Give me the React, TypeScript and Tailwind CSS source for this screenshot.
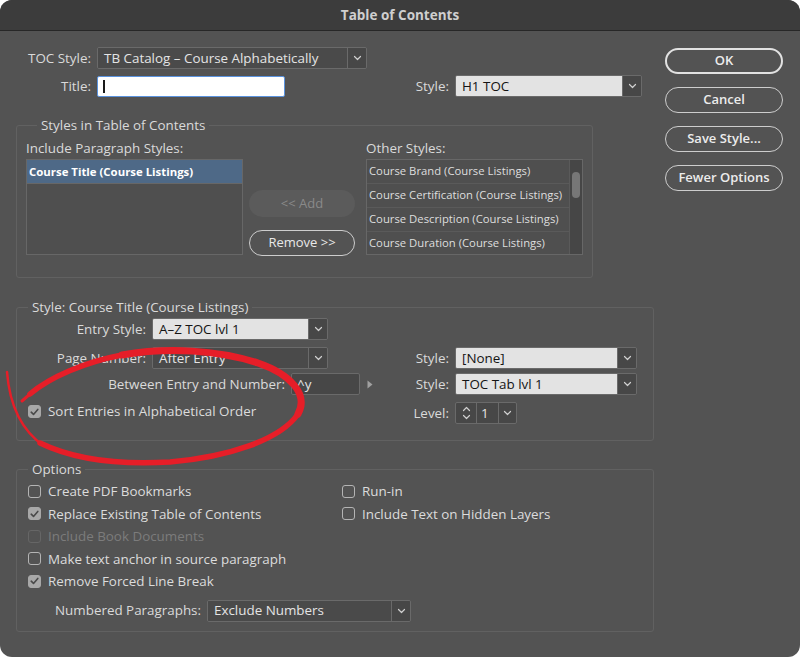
import React from 'react';

function Chevron({ up = false }: { up?: boolean }) {
  return (
    <svg width="9" height="6" viewBox="0 0 9 6" className={up ? 'rotate-180' : ''}>
      <path d="M1.5 1.5 L4.5 4.5 L7.5 1.5" fill="none" stroke="#d0d0d0" strokeWidth="1.2" strokeLinecap="round" strokeLinejoin="round" />
    </svg>
  );
}

function Select({ value, width, light = false }: { value: string; width: string; light?: boolean }) {
  return (
    <div className={`flex h-[22px] ${width} border border-[#6a6a6a] rounded-[2px] overflow-hidden`}>
      <div
        className={`flex-1 flex items-center pl-[6px] whitespace-nowrap overflow-hidden ${
          light ? 'bg-[#e3e3e3] text-[#141414]' : 'bg-[#4a4a4a] text-[#e4e4e4]'
        }`}
      >
        {value}
      </div>
      <div className="w-[19px] border-l border-[#6a6a6a] bg-[#474747] flex items-center justify-center">
        <Chevron />
      </div>
    </div>
  );
}

function Check({ label, checked = false, disabled = false }: { label: string; checked?: boolean; disabled?: boolean }) {
  return (
    <div className="flex items-center h-[22.5px] gap-[7px] whitespace-nowrap">
      <span
        className={`w-[13px] h-[13px] rounded-[3px] border flex items-center justify-center ${
          checked ? 'bg-[#a8a8a8] border-[#a8a8a8]' : disabled ? 'border-[#666666]' : 'border-[#b4b4b4]'
        }`}
      >
        {checked && (
          <svg width="9" height="8" viewBox="0 0 9 8">
            <path d="M1.2 4.2 L3.5 6.4 L7.8 1.4" fill="none" stroke="#4a4a4a" strokeWidth="1.6" strokeLinecap="round" strokeLinejoin="round" />
          </svg>
        )}
      </span>
      <span className={disabled ? 'text-[#7c7c7c]' : 'text-[#dcdcdc]'}>{label}</span>
    </div>
  );
}

function Pill({ children, primary = false }: { children: React.ReactNode; primary?: boolean }) {
  return (
    <button
      type="button"
      className={`w-[118px] h-[26px] rounded-full text-[13px] font-semibold text-[#ececec] ${
        primary ? 'border-2 border-[#e2e2e2]' : 'border-[1.5px] border-[#cdcdcd]'
      }`}
    >
      {children}
    </button>
  );
}

export default function App() {
  const others = [
    'Course Brand (Course Listings)',
    'Course Certification (Course Listings)',
    'Course Description (Course Listings)',
    'Course Duration (Course Listings)',
  ];

  return (
    <div className="relative w-[800px] h-[659px] bg-white font-['Open_Sans','Liberation_Sans',sans-serif] text-[13.4px] text-[#dadada]">
      <div className="h-[657px] rounded-[12px] bg-[#535353] overflow-hidden flex flex-col">
        {/* title bar */}
        <div className="h-[31px] shrink-0 bg-[#3c3c3c] border-b border-[#272727] flex items-center justify-center text-[13.5px] font-bold text-[#cfcfcf]">
          Table of Contents
        </div>

        <div className="flex">
          {/* left column */}
          <div className="ml-[16px] w-[638px] pt-[16px]">
            <div className="flex items-center h-[22px]">
              <span className="w-[75px] text-right mr-[6px]">TOC Style:</span>
              <Select value="TB Catalog – Course Alphabetically" width="w-[270px]" />
            </div>
            <div className="flex items-center h-[22px] mt-[6px]">
              <span className="w-[75px] text-right mr-[6px]">Title:</span>
              <div className="w-[188px] h-[21px] bg-white border border-[#5b93de] rounded-[2px] flex items-center pl-[5px]">
                <span className="w-[1.5px] h-[13px] bg-[#1a1a1a]" />
              </div>
              <span className="w-[164px] text-right mr-[6px]">Style:</span>
              <Select value="H1 TOC" width="w-[187px]" light />
            </div>

            {/* Styles in Table of Contents */}
            <fieldset className="mt-[20px] w-[577px] border border-[#616161] rounded-[3px] px-[9px] pb-[21px]">
              <legend className="ml-[11px] px-[4px] leading-[16px]">Styles in Table of Contents</legend>
              <div className="flex pt-[7px] leading-[16px]">
                <span className="w-[340px]">Include Paragraph Styles:</span>
                <span>Other Styles:</span>
              </div>
              <div className="flex items-start mt-[3px]">
                <div className="w-[217px] h-[96px] border border-[#676767] bg-[#4f4f4f]">
                  <div className="h-[24px] bg-[#4e6987] border-b border-[#676767] flex items-center pl-[2px] text-[11.4px] font-bold text-white whitespace-nowrap">
                    Course Title (Course Listings)
                  </div>
                </div>
                <div className="ml-[6px] w-[106px] pt-[31px] flex flex-col gap-[13px]">
                  <button type="button" className="h-[27px] rounded-full bg-[#5b5b5b] text-[13px] text-[#8a8a8a]">
                    &lt;&lt; Add
                  </button>
                  <button type="button" className="h-[26px] rounded-full border-[1.5px] border-[#cdcdcd] text-[13px] text-[#e8e8e8]">
                    Remove &gt;&gt;
                  </button>
                </div>
                <div className="ml-[11px] w-[217px] h-[96px] border border-[#676767] bg-[#4f4f4f] flex overflow-hidden">
                  <div className="flex-1 min-w-0">
                    {others.map((o) => (
                      <div
                        key={o}
                        className="h-[24px] border-b border-[#5a5a5a] flex items-center pl-[2px] text-[11.3px] text-[#dedede] whitespace-nowrap"
                      >
                        {o}
                      </div>
                    ))}
                  </div>
                  <div className="w-[13px] shrink-0 bg-[#464646] border-l border-[#5a5a5a] pt-[12px] flex justify-center">
                    <span className="w-[8px] h-[26px] rounded-full bg-[#777777]" />
                  </div>
                </div>
              </div>
            </fieldset>

            {/* Style: Course Title */}
            <fieldset className="mt-[21px] w-[638px] border border-[#616161] rounded-[3px] pt-[3px] pb-[16px]">
              <legend className="ml-[11px] px-[4px] leading-[16px]">Style: Course Title (Course Listings)</legend>
              <div className="flex items-center h-[22px]">
                <div className="w-[383px] flex items-center">
                  <span className="w-[129px] text-right mr-[6px]">Entry Style:</span>
                  <Select value="A–Z TOC lvl 1" width="w-[176px]" light />
                </div>
              </div>
              <div className="flex items-center h-[22px] mt-[7px]">
                <div className="w-[383px] flex items-center">
                  <span className="w-[129px] text-right mr-[6px]">Page Number:</span>
                  <Select value="After Entry" width="w-[176px]" />
                </div>
                <span className="w-[49px] text-right mr-[6px]">Style:</span>
                <Select value="[None]" width="w-[182px]" light />
              </div>
              <div className="flex items-center h-[22px] mt-[4px]">
                <div className="w-[383px] flex items-center">
                  <span className="w-[268px] text-right mr-[6px] whitespace-nowrap">Between Entry and Number:</span>
                  <div className="w-[69px] h-[22px] bg-[#474747] border border-[#6a6a6a] rounded-[2px] flex items-center pl-[5px] text-[#e4e4e4]">
                    ^y
                  </div>
                  <svg width="6" height="9" viewBox="0 0 6 9" className="ml-[7px]">
                    <path d="M0.5 0.5 L5.5 4.5 L0.5 8.5 Z" fill="#a0a0a0" />
                  </svg>
                </div>
                <span className="w-[49px] text-right mr-[6px]">Style:</span>
                <Select value="TOC Tab lvl 1" width="w-[182px]" light />
              </div>
              <div className="flex items-center h-[22px] mt-[7px]">
                <div className="w-[383px] pl-[11px] flex items-center -mt-[3px]">
                  <Check label="Sort Entries in Alphabetical Order" checked />
                </div>
                <span className="w-[49px] text-right mr-[6px]">Level:</span>
                <div className="w-[62px] h-[22px] flex border border-[#6a6a6a] rounded-[2px] bg-[#474747] overflow-hidden">
                  <div className="w-[20px] flex flex-col items-center justify-center gap-[2px]">
                    <Chevron up />
                    <Chevron />
                  </div>
                  <div className="w-[22px] border-l border-[#6a6a6a] flex items-center pl-[4px] text-[#e4e4e4]">1</div>
                  <div className="flex-1 border-l border-[#6a6a6a] flex items-center justify-center">
                    <Chevron />
                  </div>
                </div>
              </div>
            </fieldset>

            {/* Options */}
            <fieldset className="mt-[20px] w-[638px] border border-[#616161] rounded-[3px] pt-[3px] pb-[9px]">
              <legend className="ml-[11px] px-[4px] leading-[16px]">Options</legend>
              <div className="flex">
                <div className="w-[325px] pl-[11px]">
                  <Check label="Create PDF Bookmarks" />
                  <Check label="Replace Existing Table of Contents" checked />
                  <Check label="Include Book Documents" disabled />
                  <Check label="Make text anchor in source paragraph" />
                  <Check label="Remove Forced Line Break" checked />
                </div>
                <div>
                  <Check label="Run-in" />
                  <Check label="Include Text on Hidden Layers" />
                </div>
              </div>
              <div className="flex items-center h-[22px] mt-[7px] pl-[37px]">
                <span className="w-[147px] text-right mr-[6px] whitespace-nowrap">Numbered Paragraphs:</span>
                <Select value="Exclude Numbers" width="w-[204px]" />
              </div>
            </fieldset>
          </div>

          {/* right column */}
          <div className="ml-[11px] w-[118px] pt-[17px] flex flex-col gap-[13px]">
            <Pill primary>OK</Pill>
            <Pill>Cancel</Pill>
            <Pill>Save Style...</Pill>
            <Pill>Fewer Options</Pill>
          </div>
        </div>
      </div>

      {/* hand-drawn red annotation */}
      <svg className="absolute top-0 left-0 pointer-events-none" width="800" height="659" viewBox="0 0 800 659">
        <g fill="none" stroke="#e61e28" strokeLinecap="round" strokeLinejoin="round">
          <path d="M7 372 C9 398 18 428 44 446" strokeWidth="2.5" />
          <path d="M40 443 C75 460 120 465 170 462 C228 457 280 440 298 414" strokeWidth="5.5" />
          <path d="M298 414 C309 394 290 374 258 363 C218 350 168 347 122 355" strokeWidth="7" />
          <path d="M122 355 C85 362 50 377 30 394" strokeWidth="5.5" />
          <path d="M30 394 L22 401" strokeWidth="3" />
        </g>
      </svg>
    </div>
  );
}
